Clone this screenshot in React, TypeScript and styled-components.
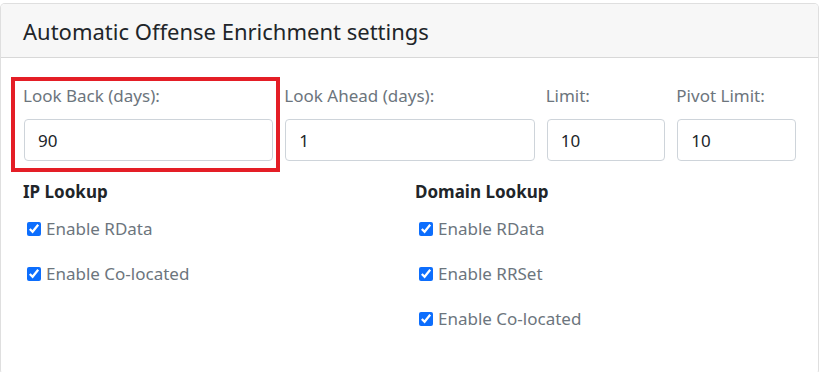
import React from "react";
import styled, { createGlobalStyle } from "styled-components";

const GlobalStyle = createGlobalStyle`
  html, body {
    margin: 0;
    padding: 0;
    background: #ffffff;
  }
  body {
    font-family: "Noto Sans", "Open Sans", sans-serif;
    color: #212529;
  }
`;

const fields = [
  { label: "Look Back (days):", value: "90", span: 4, marked: true },
  { label: "Look Ahead (days):", value: "1", span: 4, marked: false },
  { label: "Limit:", value: "10", span: 2, marked: false },
  { label: "Pivot Limit:", value: "10", span: 2, marked: false },
];

const ipChecks = ["Enable RData", "Enable Co-located"];
const domainChecks = ["Enable RData", "Enable RRSet", "Enable Co-located"];

const App = () => {
  return (
    <>
      <GlobalStyle />
      <Card>
        <CardHeader>
          <Title>Automatic Offense Enrichment settings</Title>
        </CardHeader>
        <CardBody>
          <FieldRow>
            {fields.map((f) => (
              <FieldCol key={f.label} $span={f.span}>
                <Label>{f.label}</Label>
                <Input type="text" defaultValue={f.value} />
                {f.marked && <Highlight />}
              </FieldCol>
            ))}
          </FieldRow>
          <LookupRow>
            <LookupCol>
              <SectionTitle>IP Lookup</SectionTitle>
              {ipChecks.map((c) => (
                <CheckLine key={c}>
                  <input type="checkbox" defaultChecked />
                  <span>{c}</span>
                </CheckLine>
              ))}
            </LookupCol>
            <LookupCol>
              <SectionTitle>Domain Lookup</SectionTitle>
              {domainChecks.map((c) => (
                <CheckLine key={c}>
                  <input type="checkbox" defaultChecked />
                  <span>{c}</span>
                </CheckLine>
              ))}
            </LookupCol>
          </LookupRow>
        </CardBody>
      </Card>
    </>
  );
};

export default App;

const Card = styled.div`
  margin: 3px 1px 0 0;
  height: 372px;
  border: 1px solid rgba(0, 0, 0, 0.125);
  border-radius: 5px;
  background: #fff;
  box-sizing: border-box;
  overflow: hidden;
`;

const CardHeader = styled.div`
  background: #f7f7f7;
  border-bottom: 1px solid rgba(0, 0, 0, 0.125);
  padding: 12px 22px;
  height: 54px;
  box-sizing: border-box;
  display: flex;
  align-items: center;
`;

const Title = styled.h4`
  margin: 0;
  font-size: 22px;
  font-weight: 400;
  line-height: 30px;
  color: #212529;
`;

const CardBody = styled.div`
  padding: 26px 22px 16px 23px;
`;

const FieldRow = styled.div`
  display: grid;
  grid-template-columns: repeat(12, 1fr);
  margin: 0 -6px;
`;

const FieldCol = styled.div<{ $span: number }>`
  grid-column: span ${(p) => p.$span};
  padding: 0 6px;
  position: relative;
`;

const Label = styled.label`
  display: block;
  font-size: 17px;
  line-height: 24px;
  color: #6c757d;
  margin-bottom: 11px;
  margin-left: -1px;
`;

const Input = styled.input`
  display: block;
  width: 100%;
  height: 42px;
  box-sizing: border-box;
  padding: 0 13px;
  font-family: inherit;
  font-size: 17px;
  color: #212529;
  border: 1px solid #ced4da;
  border-radius: 4px;
  background: #fff;
  outline: none;
`;

const Highlight = styled.div`
  position: absolute;
  left: -7px;
  right: -1px;
  top: -7px;
  bottom: -11px;
  border: 4px solid #e41e26;
  pointer-events: none;
`;

const LookupRow = styled.div`
  display: grid;
  grid-template-columns: 1fr 1fr;
  margin: 19px -6px 0;
`;

const LookupCol = styled.div`
  padding: 0 6px;
  display: flex;
  flex-direction: column;
  gap: 21px;
`;

const SectionTitle = styled.div`
  font-size: 17px;
  font-weight: 700;
  line-height: 24px;
  color: #212529;
  margin-bottom: -8px;
  margin-left: -1px;
`;

const CheckLine = styled.label`
  display: flex;
  align-items: center;
  font-size: 17px;
  line-height: 24px;
  color: #6c757d;
  input {
    width: 14px;
    height: 14px;
    margin: 0 5px 0 3px;
    accent-color: #0d6efd;
  }
`;
